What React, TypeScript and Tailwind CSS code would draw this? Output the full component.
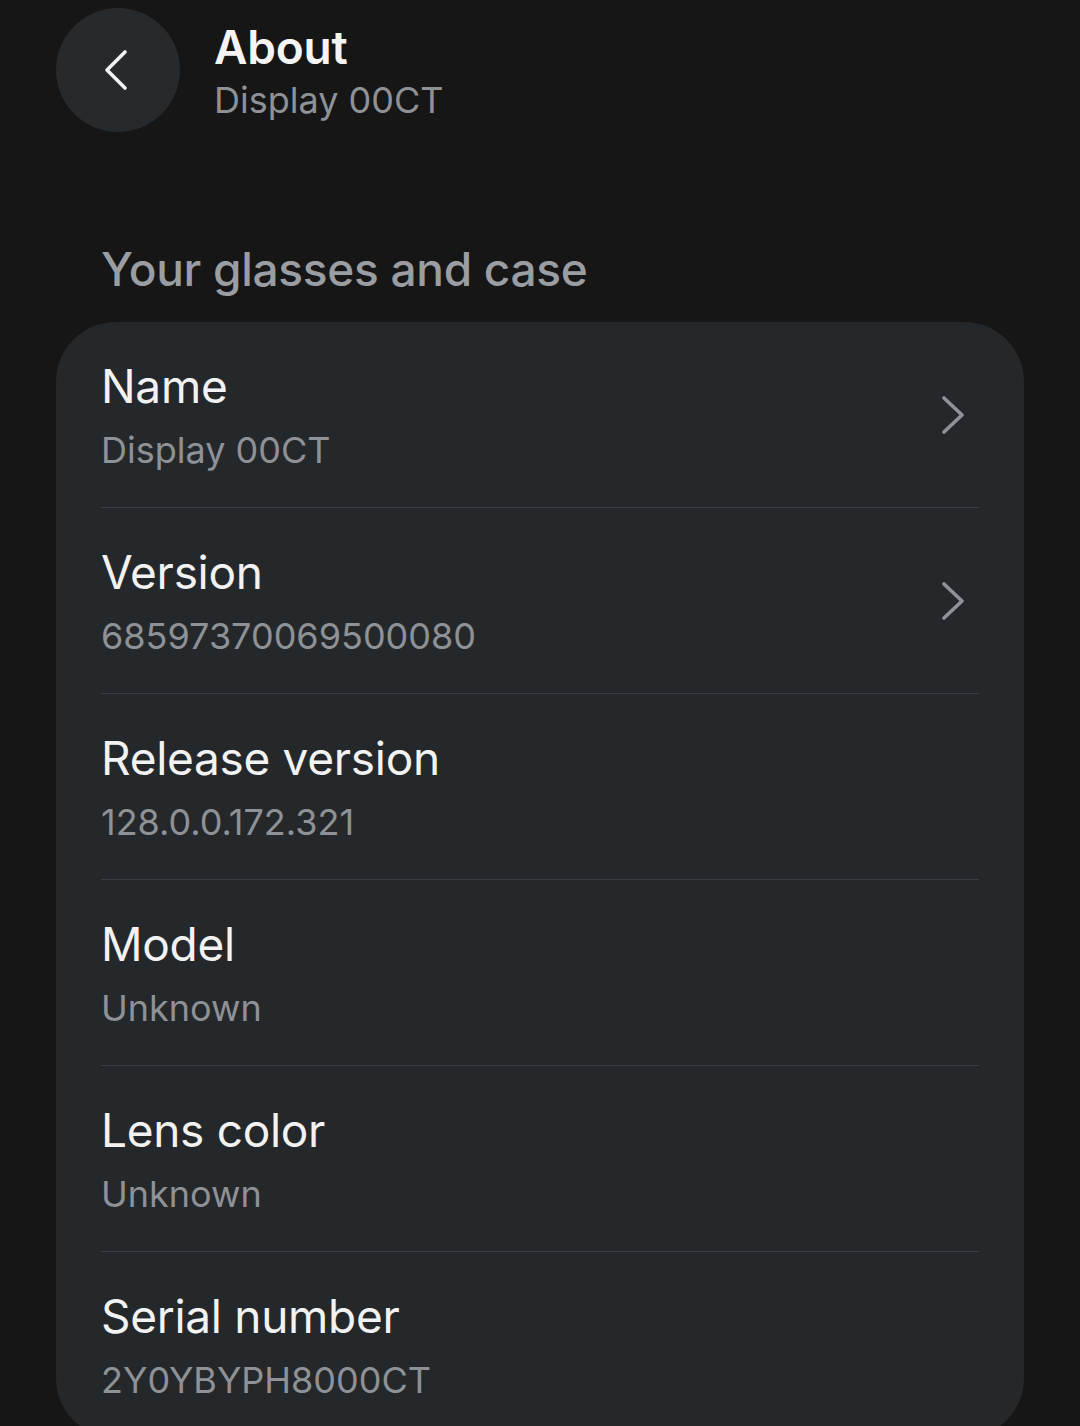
import React from 'react'

const rows = [
  { title: 'Name', value: 'Display 00CT', link: true },
  { title: 'Version', value: '68597370069500080', link: true },
  { title: 'Release version', value: '128.0.0.172.321', link: false },
  { title: 'Model', value: 'Unknown', link: false },
  { title: 'Lens color', value: 'Unknown', link: false },
  { title: 'Serial number', value: '2Y0YBYPH8000CT', link: false },
]

function ChevronLeft() {
  return (
    <svg width="26" height="42" viewBox="0 0 26 42" fill="none">
      <path d="M22 3 L4 21 L22 39" stroke="#f2f2f2" strokeWidth="3.6" strokeLinecap="round" strokeLinejoin="round" />
    </svg>
  )
}

function ChevronRight() {
  return (
    <svg width="30" height="40" viewBox="0 0 30 40" fill="none">
      <path d="M5 3 L23 20 L5 37" stroke="#8f9296" strokeWidth="3.6" strokeLinecap="round" strokeLinejoin="round" />
    </svg>
  )
}

export default function App() {
  return (
    <div className="min-h-screen bg-[#161616] font-['Inter','Noto_Sans',sans-serif] overflow-hidden">
      <header className="flex items-center pt-[8px] pl-[56px]">
        <button className="w-[124px] h-[124px] rounded-full bg-[#272a2d] flex items-center justify-center pr-[4px]">
          <ChevronLeft />
        </button>
        <div className="ml-[34px] flex flex-col gap-[3px]">
          <h1 className="text-[46px] leading-[56px] font-semibold text-[#f4f4f4] tracking-[-0.2px]">About</h1>
          <p className="text-[36px] leading-[44px] text-[#8e9195]">Display 00CT</p>
        </div>
      </header>

      <h2 className="mt-[111px] ml-[101px] text-[46px] leading-[52px] font-medium text-[#9a9da1] tracking-[-0.3px]">
        Your glasses and case
      </h2>

      <section className="mt-[27px] mx-[56px] rounded-[60px] bg-[#25282b] pr-[45px] pl-[45px]">
        {rows.map((r, i) => (
          <div
            key={r.title}
            className={`flex items-center pt-[36px] pb-[35px] ${i < rows.length - 1 ? 'border-b border-[#3a3d41]' : 'pb-[36px]'}`}
          >
            <div className="flex-1 flex flex-col gap-[14px]">
              <span className="text-[46px] leading-[56px] text-[#f2f2f2] tracking-[-0.3px]">{r.title}</span>
              <span className="text-[36px] leading-[44px] text-[#8e9195]">{r.value}</span>
            </div>
            {r.link && (
              <div className="mr-[10px]">
                <ChevronRight />
              </div>
            )}
          </div>
        ))}
      </section>
    </div>
  )
}
